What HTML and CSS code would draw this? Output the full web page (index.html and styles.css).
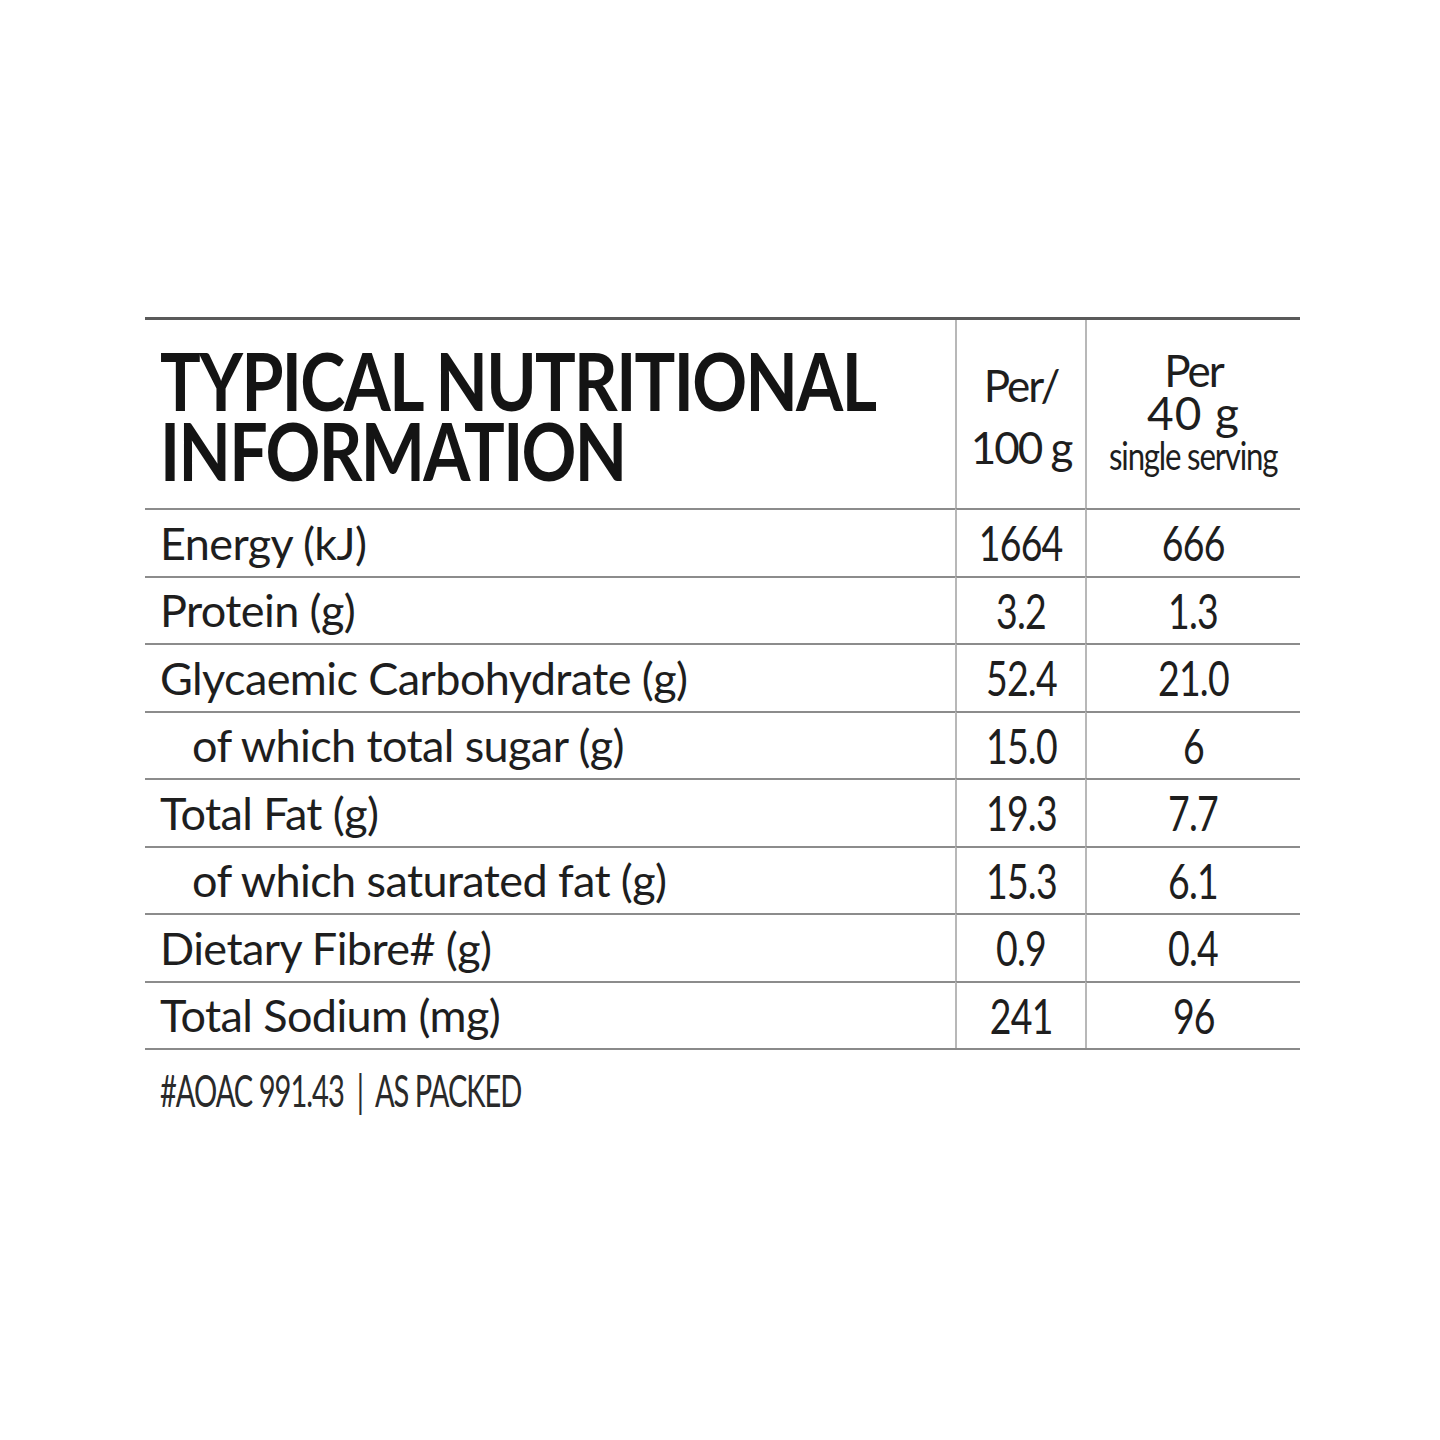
FILE: index.html
```html
<!DOCTYPE html>
<html>
<head>
<meta charset="utf-8">
<link rel="stylesheet" href="styles.css">
</head>
<body>
<div class="panel">
  <div class="table">
    <div class="cell head title"><div class="title-text">TYPICAL NUTRITIONAL<br>INFORMATION</div></div>
    <div class="cell head col1"><div>Per/<br>100 g</div></div>
    <div class="cell head col2"><div class="serving"><span class="per">Per</span><span class="forty">40 g</span><span class="single">single serving</span></div></div>

    <div class="cell name">Energy (kJ)</div><div class="cell num col1"><span>1664</span></div><div class="cell num col2"><span>666</span></div>
    <div class="cell name">Protein (g)</div><div class="cell num col1"><span>3.2</span></div><div class="cell num col2"><span>1.3</span></div>
    <div class="cell name">Glycaemic Carbohydrate (g)</div><div class="cell num col1"><span>52.4</span></div><div class="cell num col2"><span>21.0</span></div>
    <div class="cell name sub">of which total sugar (g)</div><div class="cell num col1"><span>15.0</span></div><div class="cell num col2"><span>6</span></div>
    <div class="cell name">Total Fat (g)</div><div class="cell num col1"><span>19.3</span></div><div class="cell num col2"><span>7.7</span></div>
    <div class="cell name sub">of which saturated fat (g)</div><div class="cell num col1"><span>15.3</span></div><div class="cell num col2"><span>6.1</span></div>
    <div class="cell name">Dietary Fibre# (g)</div><div class="cell num col1"><span>0.9</span></div><div class="cell num col2"><span>0.4</span></div>
    <div class="cell name">Total Sodium (mg)</div><div class="cell num col1"><span>241</span></div><div class="cell num col2"><span>96</span></div>
  </div>
  <div class="foot"><span class="foot-text">#AOAC 991.43 &nbsp;|&nbsp; AS PACKED</span></div>
</div>
</body>
</html>
```
FILE: styles.css
```css
html, body {
  margin: 0;
  padding: 0;
  background: #ffffff;
}
body {
  width: 1440px;
  height: 1440px;
  font-family: Lato, "Open Sans", sans-serif;
  color: #1e1e1e;
}
.panel {
  padding-top: 317px;
  padding-left: 145px;
}
.table {
  width: 1155px;
  display: grid;
  grid-template-columns: 810px 130px 215px;
  grid-template-rows: 188px repeat(8, 67.5px);
  border-top: 3px solid #5a5a5a;
  border-bottom: 2px solid #8a8a8a;
}
.cell {
  display: flex;
  align-items: center;
  border-top: 2px solid #8c8c8c;
  box-sizing: border-box;
  white-space: nowrap;
}
.head {
  border-top: none;
}
.col1, .col2 {
  border-left: 2px solid #b8b8b8;
  justify-content: center;
  text-align: center;
}
.title {
  padding-left: 15px;
  padding-top: 2px;
}
.title-text {
  font-weight: 700;
  font-size: 80px;
  line-height: 70px;
  letter-spacing: -2px;
  color: #141414;
  transform: scaleX(0.85);
  transform-origin: left center;
}
.head.col1 {
  font-size: 44px;
  line-height: 62px;
  letter-spacing: -2px;
  padding-top: 4px;
}
.serving {
  display: flex;
  flex-direction: column;
  align-items: center;
  margin-top: -4px;
}
.per { font-size: 44px; letter-spacing: -2px; line-height: 44px; }
.forty { font-size: 46px; line-height: 42px; letter-spacing: 1px; }
.single {
  display: inline-block;
  font-size: 39px;
  line-height: 42px;
  letter-spacing: -1.5px;
  transform: scaleX(0.8);
}
.name {
  padding-left: 15px;
  font-size: 45px;
  letter-spacing: -0.6px;
}
.sub {
  padding-left: 47px;
}
.num {
  font-size: 48px;
}
.num span {
  display: inline-block;
  letter-spacing: -1px;
  transform: scaleX(0.78);
}
.foot {
  padding-left: 15px;
  padding-top: 14px;
}
.foot-text {
  display: inline-block;
  font-size: 44px;
  letter-spacing: -1.5px;
  color: #2a2a2a;
  transform: scaleX(0.66);
  transform-origin: left center;
}
```
